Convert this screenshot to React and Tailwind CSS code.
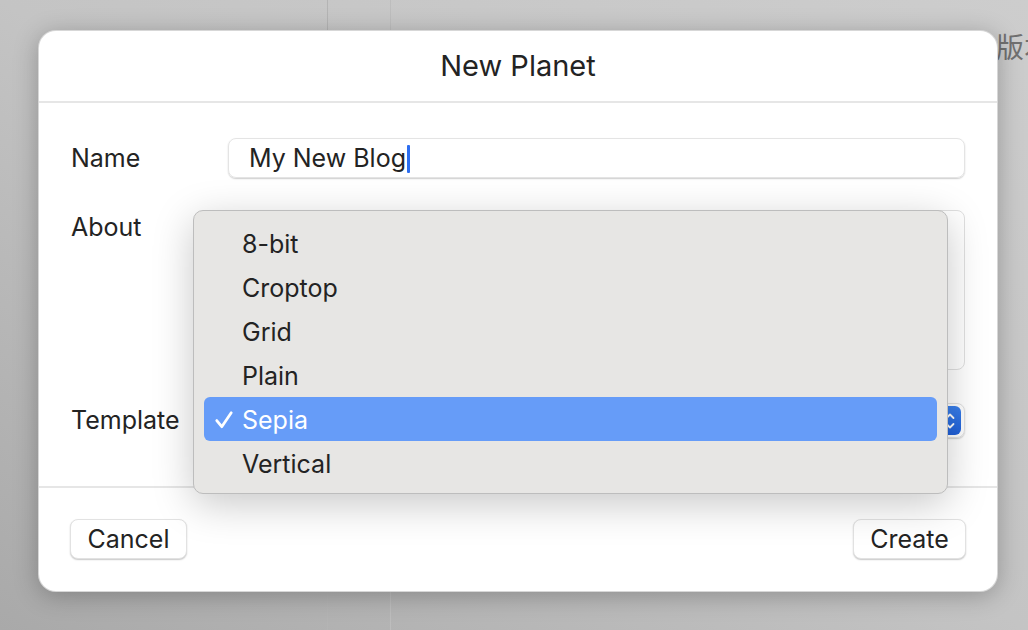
import React from "react";

const templates = ["8-bit", "Croptop", "Grid", "Plain", "Sepia", "Vertical"];

// --- dropdown menu shown over the template popup ---
const TemplateMenu = ({ selected }) => (
  <div className="absolute left-[154px] top-[179px] w-[755px] h-[284px] rounded-[10px] bg-[#e7e6e4] border border-[#bdbdbd] shadow-[0_10px_40px_rgba(0,0,0,0.22)] pt-[10px]">
    {templates.map((t) => {
      const isSel = t === selected;
      return (
        <div
          key={t}
          className={`mx-[10px] h-[44px] flex items-center rounded-[6px] ${
            isSel ? "bg-[#669cf8] text-white" : "text-[#232323]"
          }`}
        >
          <span className="w-[38px] flex justify-center pl-[1px] pt-[2px]">
            {isSel && (
              <svg width="20" height="20" viewBox="0 0 18 18" fill="none">
                <path
                  d="M2.5 9.5 L7 15 L15.5 2.5"
                  stroke="white"
                  strokeWidth="2.5"
                  strokeLinecap="round"
                  strokeLinejoin="round"
                />
              </svg>
            )}
          </span>
          <span className="text-[25px] pt-[3px]">{t}</span>
        </div>
      );
    })}
  </div>
);

const Button = ({ children, w }) => (
  <button
    className={`${w} h-[40px] rounded-[8px] bg-white border border-[#e2e2e2] shadow-[0_1px_1.5px_rgba(0,0,0,0.22)] text-[25px] text-[#232323] pt-[1px]`}
  >
    {children}
  </button>
);

export default function App() {
  return (
    <div
      className="relative w-[1028px] h-[630px] overflow-hidden bg-gradient-to-tr from-[#a9a9a9] via-[#c4c4c4] to-[#cdcdcd]"
      style={{ fontFamily: "Inter, 'Noto Sans CJK SC', sans-serif" }}
    >
      {/* --- window behind the sheet --- */}
      <div className="flex h-full">
        <div className="w-[328px] border-r border-[#b4b4b4]" />
        <div className="w-[63px] border-r border-[#bdbdbd]" />
        <div className="flex-1 flex justify-end">
          <span className="mt-[30px] mr-[-24px] text-[28px] text-[#707070] leading-[36px] whitespace-nowrap">
            版本
          </span>
        </div>
      </div>

      {/* --- sheet --- */}
      <div className="absolute left-[38px] top-[30px] w-[960px] h-[562px] rounded-[18px] bg-white shadow-[0_4px_24px_rgba(0,0,0,0.25)] border border-[#9a9a9a]/40 flex flex-col">
        <div className="h-[72px] flex items-center justify-center border-b-2 border-[#e6e6e6] text-[29px] text-[#232323]">
          New Planet
        </div>

        <div className="px-[32px] pt-[35px] grid grid-cols-[157px_1fr] text-[25px] text-[#232323]">
          <div className="h-[40px] flex items-center pt-[1px]">Name</div>
          <div className="h-[40px] rounded-[8px] border border-[#e4e4e4] shadow-[0_1px_1.5px_rgba(0,0,0,0.2)] flex items-center pl-[20px] pt-[1px]">
            <span>My New Blog</span>
            <span className="ml-[1px] w-[3px] h-[28px] bg-[#2d6ef0] rounded-[1px]" />
          </div>

          <div className="mt-[32px] leading-[34px]">About</div>
          <div className="mt-[32px] h-[160px] rounded-[8px] border border-[#e0e0e0] bg-white" />

          <div className="mt-[33px] h-[35px] flex items-center pt-[1px]">Template</div>
          <div className="mt-[33px] h-[35px] rounded-[8px] border border-[#e2e2e2] shadow-[0_1px_1.5px_rgba(0,0,0,0.2)] flex items-center justify-between pl-[14px] pr-[3px]">
            <span>Sepia</span>
            <span className="w-[22px] h-[29px] rounded-[6px] bg-gradient-to-b from-[#3a80ec] to-[#1f5fd8] flex items-center justify-center">
              <svg width="12" height="20" viewBox="0 0 12 20" fill="none">
                <path d="M2.5 7 L6 3.5 L9.5 7" stroke="white" strokeWidth="1.8" strokeLinecap="round" strokeLinejoin="round" />
                <path d="M2.5 13 L6 16.5 L9.5 13" stroke="white" strokeWidth="1.8" strokeLinecap="round" strokeLinejoin="round" />
              </svg>
            </span>
          </div>
        </div>

        <div className="mt-[48px] border-t-2 border-[#e6e6e6]" />

        <div className="px-[31px] pt-[31px] flex justify-between">
          <Button w="w-[117px]">Cancel</Button>
          <Button w="w-[113px]">Create</Button>
        </div>

        <TemplateMenu selected="Sepia" />
      </div>
    </div>
  );
}
